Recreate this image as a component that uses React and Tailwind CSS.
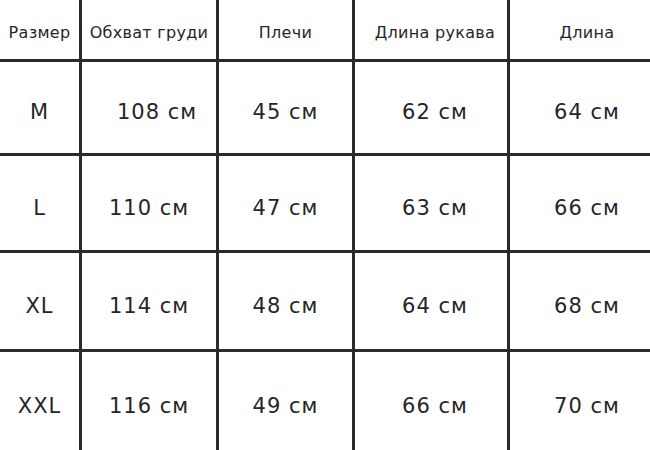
import React from "react";

const headers = ["Размер", "Обхват груди", "Плечи", "Длина рукава", "Длина"];

const rows = [
  ["M", "108 см", "45 см", "62 см", "64 см"],
  ["L", "110 см", "47 см", "63 см", "66 см"],
  ["XL", "114 см", "48 см", "64 см", "68 см"],
  ["XXL", "116 см", "49 см", "66 см", "70 см"],
];

const colPad = ["", "", "", "pl-[8px]", "pl-[14px]"];

const App = () => {
  return (
    <div
      className="w-[650px] h-[450px] bg-[#2b2b2b] grid gap-[3px] grid-cols-[79px_134px_133px_152px_140px] grid-rows-[59px_91px_94px_96px_98px] text-[#262626]"
      style={{ fontFamily: '"DejaVu Sans", sans-serif' }}
    >
      {headers.map((h, i) => (
        <div
          key={h}
          className={`bg-white flex items-center justify-center pt-[6px] text-[16px] tracking-[0.3px] whitespace-nowrap ${colPad[i]}`}
        >
          {h}
        </div>
      ))}
      {rows.map((r) =>
        r.map((c, i) => (
          <div
            key={r[0] + i}
            className={`bg-white flex items-center justify-center pt-[11px] text-[21px] tracking-[1px] whitespace-nowrap ${colPad[i]} ${
              c === "108 см" ? "pl-[16px]" : ""
            }`}
          >
            {c}
          </div>
        ))
      )}
    </div>
  );
};

export default App;
